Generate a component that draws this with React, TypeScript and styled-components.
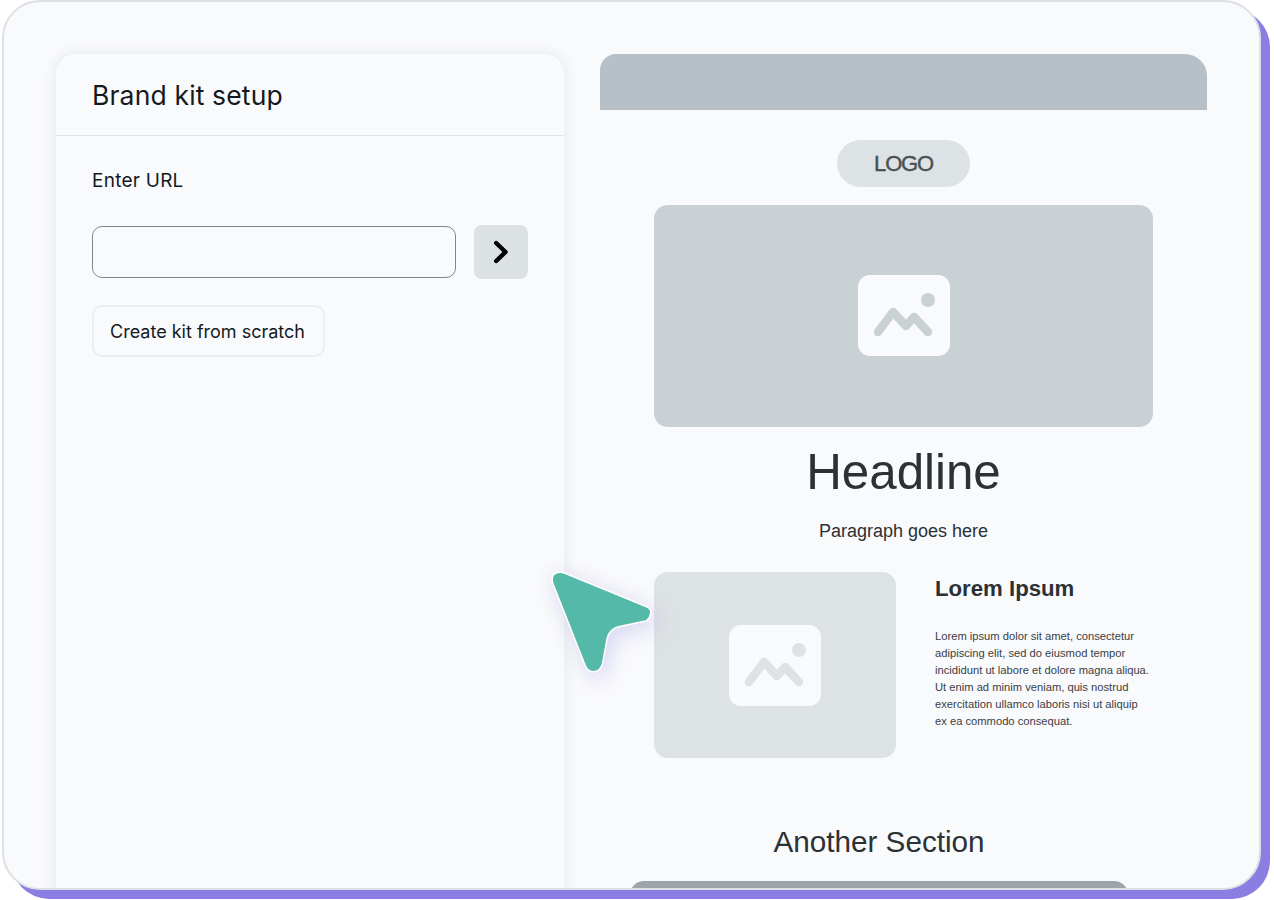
import styled, { createGlobalStyle } from "styled-components";

const GlobalStyle = createGlobalStyle`
  html, body {
    margin: 0;
    background: #ffffff;
  }
`;

const Stage = styled.div`
  position: relative;
  width: 1274px;
  height: 900px;
  padding-left: 2px;
  box-sizing: border-box;
  overflow: hidden;
`;

const Frame = styled.div`
  display: flex;
  gap: 36px;
  width: 1259px;
  height: 890px;
  box-sizing: border-box;
  padding: 52px 0 0 52px;
  background: #f9fafc;
  border: 2px solid #dde1e5;
  border-radius: 38px;
  box-shadow: 9px 9px 0 0 #8a7ee2;
  overflow: hidden;
`;

const Panel = styled.aside`
  flex: none;
  width: 508px;
  height: 860px;
  box-sizing: border-box;
  background: #f9fafc;
  border-radius: 20px 20px 0 0;
  box-shadow: 0 0 8px 5px #eef0f3;
  font-family: Inter, "Noto Sans", sans-serif;
  color: #15191c;
`;

const PanelHeader = styled.header`
  height: 82px;
  box-sizing: border-box;
  padding: 0 36px;
  display: flex;
  align-items: center;
  border-bottom: 1px solid #e0e4e8;
  font-size: 26.5px;
  letter-spacing: 0.15px;
`;

const PanelBody = styled.div`
  display: flex;
  flex-direction: column;
  align-items: flex-start;
  padding: 33px 36px 0;
`;

const FieldLabel = styled.label`
  font-size: 19px;
  line-height: 24px;
  letter-spacing: 0.25px;
`;

const UrlRow = styled.div`
  display: flex;
  align-items: center;
  gap: 18px;
  margin-top: 32px;
`;

const UrlInput = styled.input`
  width: 364px;
  height: 52px;
  box-sizing: border-box;
  background: transparent;
  border: 1px solid #7f878c;
  border-radius: 10px;
  outline: none;
`;

const GoButton = styled.button`
  width: 54px;
  height: 54px;
  padding: 0;
  display: flex;
  align-items: center;
  justify-content: center;
  background: #dce1e3;
  border: none;
  border-radius: 8px;
`;

const ScratchButton = styled.button`
  margin-top: 26px;
  height: 52px;
  width: 233px;
  padding: 0 2px 0 0;
  box-sizing: border-box;
  background: transparent;
  border: 2px solid #eceef1;
  border-radius: 10px;
  font-family: Inter, "Noto Sans", sans-serif;
  font-size: 18px;
  color: #15191c;
`;

const Preview = styled.main`
  flex: none;
  width: 607px;
  display: flex;
  flex-direction: column;
  align-items: center;
  font-family: "Liberation Sans", Arial, sans-serif;
  color: #2b3134;
`;

const TopBar = styled.div`
  align-self: stretch;
  flex: none;
  height: 56px;
  background: #b7c0c6;
  border-radius: 16px 22px 0 0;
`;

const LogoPill = styled.div`
  flex: none;
  margin-top: 30px;
  width: 133px;
  height: 47px;
  display: flex;
  align-items: center;
  justify-content: center;
  background: #dde2e4;
  border-radius: 24px;
  font-size: 22px;
  letter-spacing: -1.2px;
  color: #4a5054;
  -webkit-text-stroke: 0.4px #4a5054;
`;

const ImageBox = styled.div<{ $tone: string; $w: number; $h: number; $lift?: number }>`
  flex: none;
  width: ${(p) => p.$w}px;
  height: ${(p) => p.$h}px;
  box-sizing: border-box;
  padding-bottom: ${(p) => p.$lift ?? 0}px;
  display: flex;
  align-items: center;
  justify-content: center;
  background: ${(p) => p.$tone};
  border-radius: 14px;
`;

const HeroSlot = styled.div`
  flex: none;
  margin-top: 18px;
`;

const Headline = styled.h1`
  flex: none;
  margin: 16px 0 0;
  font-size: 49.3px;
  line-height: 58px;
  font-weight: 400;
`;

const Paragraph = styled.p`
  flex: none;
  margin: 19px 0 0;
  font-size: 18px;
  line-height: 22px;
`;

const SplitRow = styled.section`
  flex: none;
  width: 499px;
  margin-top: 30px;
  display: flex;
  gap: 39px;
`;

const SplitText = styled.div`
  padding-top: 4px;
`;

const SplitTitle = styled.h2`
  margin: 0;
  font-size: 22.2px;
  line-height: 26px;
  font-weight: 700;
`;

const SplitBody = styled.p`
  margin: 26px 0 0;
  font-size: 11.2px;
  line-height: 17px;
  white-space: pre-line;
  color: #3a4044;
`;

const LowerSection = styled.section`
  flex: none;
  align-self: flex-start;
  margin: 66px 0 0 30px;
  width: 498px;
  display: flex;
  flex-direction: column;
`;

const SectionTitle = styled.h2`
  margin: 0;
  font-size: 29.7px;
  line-height: 36px;
  font-weight: 400;
  text-align: center;
`;

const SectionBar = styled.div`
  margin-top: 21px;
  height: 120px;
  background: #9da5aa;
  border-radius: 14px 14px 0 0;
`;

const Pointer = styled.svg`
  position: absolute;
  left: 550px;
  top: 570px;
  overflow: visible;
  filter: drop-shadow(5px 8px 10px rgba(150, 140, 245, 0.22))
    drop-shadow(0 0 9px rgba(205, 210, 220, 0.35));
`;

function PictureIcon({ tone }: { tone: string }) {
  return (
    <svg width="92" height="81" viewBox="0 0 92 81" fill="none">
      <rect width="92" height="81" rx="12" fill="#f9fafc" />
      <path
        d="M20 57 L35 37 L48 51 L56 42 L70 57"
        stroke={tone}
        strokeWidth="8.5"
        strokeLinecap="round"
        strokeLinejoin="round"
      />
      <circle cx="70" cy="25" r="7" fill={tone} />
    </svg>
  );
}

export default function App() {
  return (
    <>
      <GlobalStyle />
      <Stage>
        <Frame>
          <Panel>
            <PanelHeader>Brand kit setup</PanelHeader>
            <PanelBody>
              <FieldLabel>Enter URL</FieldLabel>
              <UrlRow>
                <UrlInput />
                <GoButton>
                  <svg width="16" height="24" viewBox="0 0 16 24" fill="none">
                    <path
                      d="M3.2 3 L12.5 12 L3.2 21"
                      stroke="#000"
                      strokeWidth="4.4"
                      strokeLinecap="round"
                      strokeLinejoin="round"
                    />
                  </svg>
                </GoButton>
              </UrlRow>
              <ScratchButton>Create kit from scratch</ScratchButton>
            </PanelBody>
          </Panel>
          <Preview>
            <TopBar />
            <LogoPill>LOGO</LogoPill>
            <HeroSlot>
              <ImageBox $tone="#c9d1d4" $w={499} $h={222} $lift={1}>
                <PictureIcon tone="#c9d1d4" />
              </ImageBox>
            </HeroSlot>
            <Headline>Headline</Headline>
            <Paragraph>Paragraph goes here</Paragraph>
            <SplitRow>
              <ImageBox $tone="#dde2e4" $w={242} $h={186}>
                <PictureIcon tone="#dde2e4" />
              </ImageBox>
              <SplitText>
                <SplitTitle>Lorem Ipsum</SplitTitle>
                <SplitBody>
                  {`Lorem ipsum dolor sit amet, consectetur
adipiscing elit, sed do eiusmod tempor
incididunt ut labore et dolore magna aliqua.
Ut enim ad minim veniam, quis nostrud
exercitation ullamco laboris nisi ut aliquip
ex ea commodo consequat.`}
                </SplitBody>
              </SplitText>
            </SplitRow>
            <LowerSection>
              <SectionTitle>Another Section</SectionTitle>
              <SectionBar />
            </LowerSection>
          </Preview>
        </Frame>
        <Pointer width="104" height="104" viewBox="0 0 104 104">
          <path
            d="M15 3.3 L96.7 36.7 Q101.5 39.5 100.7 43.3 Q100 48 96.7 50.7 L72 56 Q58 58 56.5 72 L52.7 93 Q50.5 101.7 43.3 101.7 Q37.5 101.7 35 95 L2.7 13 Q1 6 5 3.5 Q9.5 1 15 3.3 Z"
            fill="#54b9a9"
            stroke="#ffffff"
            strokeWidth="1.5"
          />
        </Pointer>
      </Stage>
    </>
  );
}
